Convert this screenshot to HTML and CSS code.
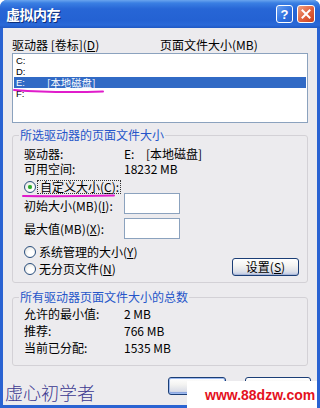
FILE: index.html
```html
<!DOCTYPE html>
<html lang="zh-CN">
<head>
<meta charset="utf-8">
<link rel="stylesheet" href="styles.css">
</head>
<body>
<div class="window">
  <div class="titlebar">
    <span class="title">虚拟内存</span>
    <div class="tbtns">
      <span class="tb help">?</span>
      <span class="tb close"><svg width="10" height="10" viewBox="0 0 10 10"><path d="M1.5 1.5 L8.5 8.5 M8.5 1.5 L1.5 8.5" stroke="#fff" stroke-width="2" stroke-linecap="square"/></svg></span>
    </div>
  </div>
  <div class="client">
    <div class="main">
      <div class="colhead"><span class="c1">驱动器 [卷标](<u>D</u>)</span><span class="c2">页面文件大小(MB)</span></div>
      <div class="list">
        <div class="row"><span class="drv">C:</span></div>
        <div class="row"><span class="drv">D:</span></div>
        <div class="row sel"><span class="drv">E:</span><span class="vol">[本地磁盘]</span></div>
        <div class="row"><span class="drv">F:</span></div>
        <svg class="mark mark1" width="92" height="6" viewBox="0 0 92 6"><path d="M1 2 Q40 5 90 3.5" stroke="#e01ccb" stroke-width="2" fill="none" stroke-linecap="round"/></svg>
      </div>
      <fieldset class="grp g1">
        <legend>所选驱动器的页面文件大小</legend>
        <div class="kv"><span class="k">驱动器:<br>可用空间:</span><span class="v"><span class="drv2">E:</span>[本地磁盘]<br>18232 MB</span></div>
        <div class="radio-row first">
          <span class="rb on"></span><span class="focus">自定义大小(<u>C</u>):</span>
          <svg class="mark mark2" width="94" height="6" viewBox="0 0 94 6"><path d="M1 3 Q45 3.5 92 2.5" stroke="#e01ccb" stroke-width="2" fill="none" stroke-linecap="round"/></svg>
        </div>
        <div class="field"><span class="k">初始大小(MB)(<u>I</u>):</span><span class="input"></span></div>
        <div class="field f2"><span class="k">最大值(MB)(<u>X</u>):</span><span class="input"></span></div>
        <div class="lower">
          <div class="radios">
            <div class="radio-row"><span class="rb"></span><span class="rl">系统管理的大小(<u>Y</u>)</span></div>
            <div class="radio-row"><span class="rb"></span><span class="rl">无分页文件(<u>N</u>)</span></div>
          </div>
          <span class="btn set">设置(<u>S</u>)</span>
        </div>
      </fieldset>
      <fieldset class="grp g2">
        <legend>所有驱动器页面文件大小的总数</legend>
        <div class="kv2"><span class="k">允许的最小值:</span><span class="v">2 MB</span></div>
        <div class="kv2"><span class="k">推荐:</span><span class="v">766 MB</span></div>
        <div class="kv2"><span class="k">当前已分配:</span><span class="v">1535 MB</span></div>
      </fieldset>
    </div>
    <div class="footer">
      <span class="sig">虚心初学者</span>
      <div class="fbtns">
        <span class="btn ok"></span>
        <span class="btn cancel"></span>
      </div>
    </div>
  </div>
  <div class="watermark">www.88dzw.com</div>
</div>
</body>
</html>
```
FILE: styles.css
```css
* { box-sizing: border-box; }
html, body { margin: 0; padding: 0; }
body {
  width: 320px;
  height: 408px;
  overflow: hidden;
  font-family: "Noto Sans CJK SC", "Liberation Sans", sans-serif;
  font-size: 12px;
  color: #000;
  background: #fff;
}
u { text-decoration: underline; text-underline-offset: 1px; }

.window {
  position: relative;
  width: 320px;
  height: 408px;
  display: flex;
  flex-direction: column;
  background: #2a63d2;
  border-radius: 7px 7px 0 0;
  overflow: hidden;
}

.titlebar {
  height: 28px;
  flex: none;
  display: flex;
  align-items: center;
  justify-content: space-between;
  padding: 0 5px 0 6px;
  background: linear-gradient(#6aa5ee 0px, #3a7fe3 3px, #2766d6 9px, #2462d3 20px, #2a69d8 25px, #1f58c4 28px);
}
.title {
  color: #fff;
  font-weight: bold;
  font-size: 14px;
  line-height: 16px;
  letter-spacing: -0.5px;
  text-shadow: 1px 1px 0 #0d2f7a;
}
.tbtns { display: flex; gap: 4px; align-items: center; }
.tb {
  width: 17px;
  height: 18px;
  border: 1px solid #fff;
  border-radius: 3px;
  display: flex;
  align-items: center;
  justify-content: center;
  color: #fff;
  font-family: "Liberation Sans", sans-serif;
  font-weight: bold;
  font-size: 13px;
  line-height: 1;
}
.help { background: linear-gradient(135deg, #6aa0f0, #2b6ee0 60%, #2a62cc); }
.close { width: 18px; background: linear-gradient(135deg, #f0a080, #e0603c 55%, #c8401e); }

.client {
  flex: 1;
  margin: 0 3px 3px 3px;
  background: #ecebee;
  display: flex;
  flex-direction: column;
}
.main { padding: 10px 9px 0 9px; }

.colhead {
  display: flex;
  line-height: 14px;
  height: 14px;
}
.c1 { width: 148px; }

.list {
  position: relative;
  margin-top: 1px;
  height: 70px;
  background: #fff;
  border: 1px solid #8ba2be;
  padding: 1px 1px 0 1px;
}
.row {
  height: 11px;
  padding-left: 2px;
  display: flex;
  align-items: center;
}
.row.sel { background: #316ac5; color: #fff; }
.drv {
  width: 31px;
  font-family: "Liberation Sans", sans-serif;
  font-size: 9.5px;
  line-height: 11px;
}
.vol {
  font-size: 7.5px;
  line-height: 11px;
  display: inline-block;
  transform: scale(1.38);
  transform-origin: left center;
}
.mark { position: absolute; pointer-events: none; }
.mark1 { left: 0px; top: 34px; }

.grp {
  margin: 0;
  border: 1px solid #d3d1d6;
  border-radius: 3px;
  min-width: 0;
}
.grp legend {
  padding: 0 1px;
  margin-left: -5px;
  color: #2555c9;
  line-height: 14px;
}
.g1 {
  margin-top: 5px;
  height: 155px;
  padding: 4px 8px 0 11px;
}
.kv { display: flex; line-height: 15px; }
.kv .k { width: 100px; }
.drv2 { display: inline-block; width: 22px; }

.radio-row {
  position: relative;
  display: flex;
  align-items: center;
}
.radio-row.first { margin-top: 4px; height: 13px; line-height: 13px; }
.rb {
  width: 12px;
  height: 12px;
  border-radius: 50%;
  border: 1px solid #2a4f7e;
  background: radial-gradient(circle at 60% 65%, #ffffff 30%, #dcdcd6 100%);
  position: relative;
  flex: none;
}
.rb.on::after {
  content: "";
  position: absolute;
  left: 3px;
  top: 3px;
  width: 4px;
  height: 4px;
  border-radius: 50%;
  background: #2ca82c;
  box-shadow: 0 0 1px #6fd46f;
}
.focus {
  margin-left: 2px;
  padding: 0 1px 0 2px;
  outline: 1px dotted #333;
  line-height: 12px;
}
.mark2 { left: -2px; top: 13px; }

.field { display: flex; align-items: center; height: 21px; }
.field .k { width: 100px; padding-top: 3px; }
.field.f2 { margin-top: 4px; }
.field.f2 .k { padding-top: 0; }
.input {
  width: 56px;
  height: 21px;
  background: #fff;
  border: 1px solid #8ba2be;
}

.lower {
  display: flex;
  justify-content: space-between;
  align-items: flex-end;
  margin-top: 4px;
}
.radios .radio-row { height: 17px; }
.rl { margin-left: 3px; line-height: 17px; }

.btn {
  display: flex;
  align-items: center;
  justify-content: center;
  border: 1px solid #1b3e76;
  border-radius: 3px;
  background: linear-gradient(#ffffff 0%, #f4f4f2 40%, #dcdfe8 80%, #b8c6e4 100%);
  box-shadow: inset 0 -1px 0 #a9b6d6;
  line-height: 16px;
}
.set { width: 67px; height: 18px; margin-bottom: 1px; }

.g2 {
  margin-top: 7px;
  height: 76px;
  padding: 1px 8px 0 11px;
}
.kv2 { display: flex; height: 17px; line-height: 17px; }
.kv2 .k { width: 100px; }

.footer {
  flex: 1;
  display: flex;
  align-items: flex-start;
  justify-content: space-between;
  padding: 11px 6px 0 2px;
}
.sig {
  margin-top: 5px;
  font-size: 18px;
  line-height: 20px;
  font-weight: 300;
  color: #3b3890;
}
.fbtns { display: flex; gap: 19px; }
.btn.ok { width: 58px; height: 18px; box-shadow: inset 0 0 0 1px #9dbaf0, inset 0 -2px 0 #8fa8e0; }
.btn.cancel { width: 66px; height: 18px; }

.watermark {
  position: absolute;
  left: 187px;
  top: 381px;
  width: 130px;
  height: 27px;
  background: #fff;
  color: #e4121e;
  font-family: "Liberation Sans", Arial, sans-serif;
  font-weight: bold;
  font-size: 14px;
  line-height: 27px;
  padding-left: 18px;
  padding-top: 1px;
}
```
